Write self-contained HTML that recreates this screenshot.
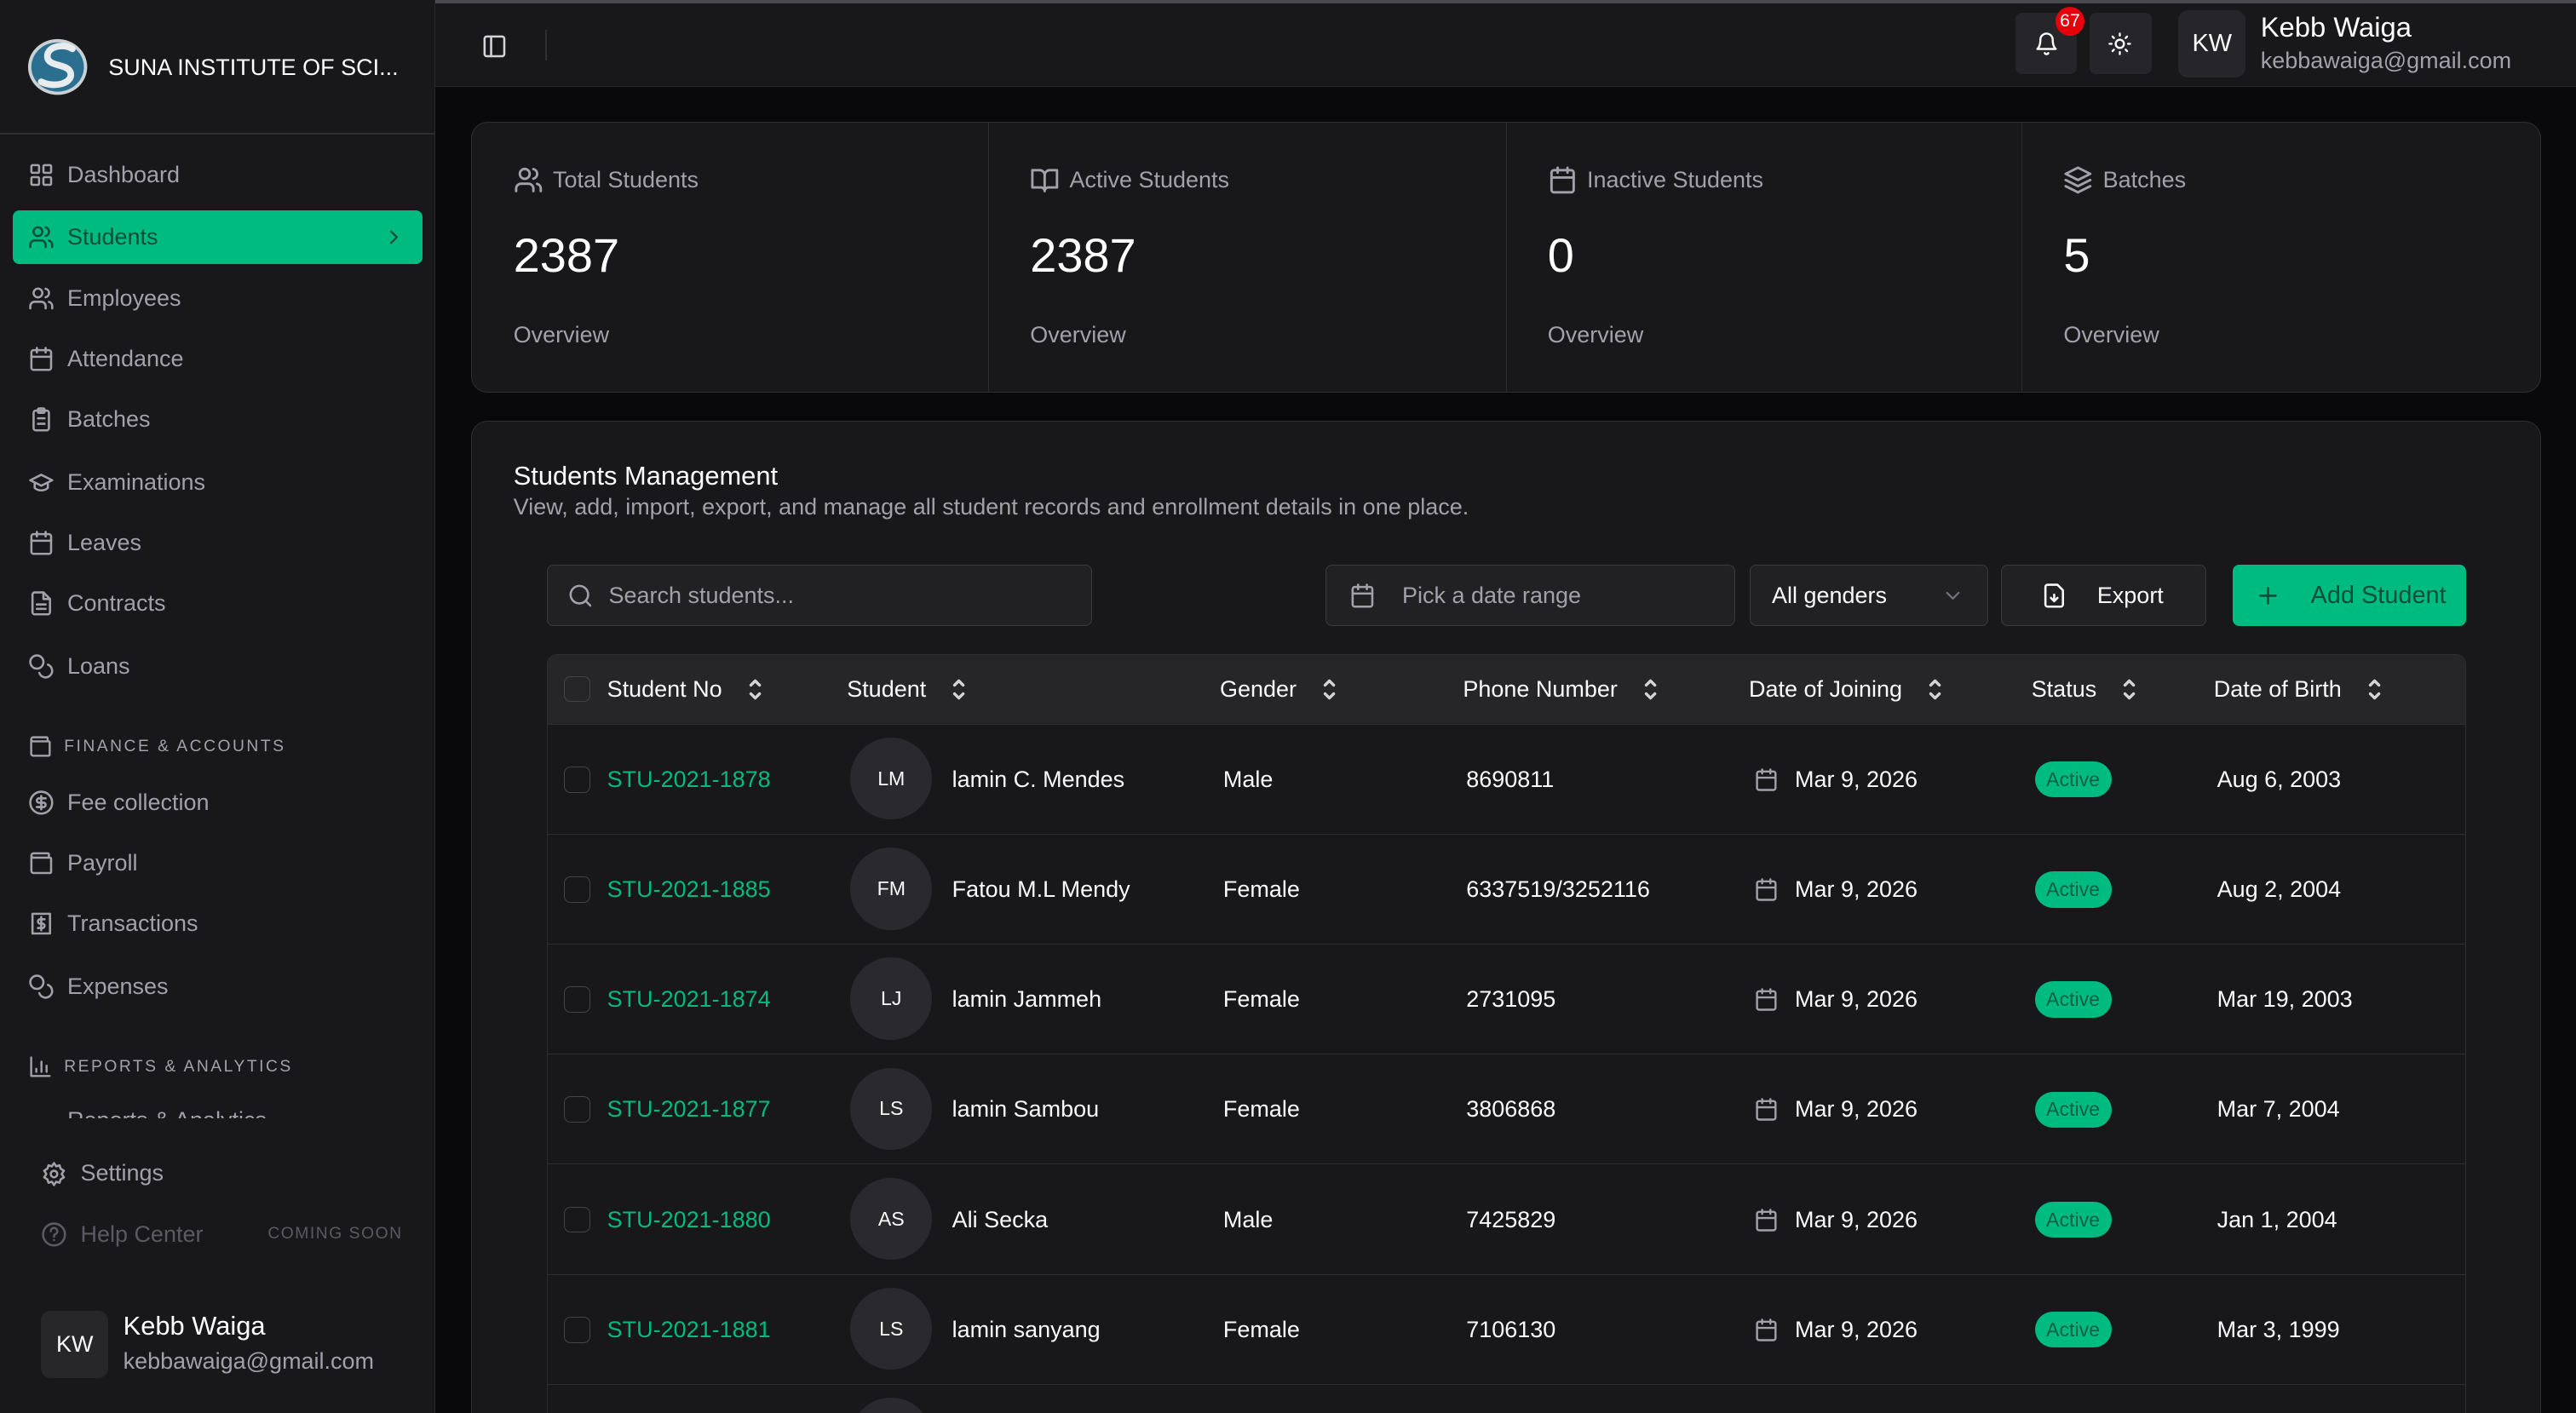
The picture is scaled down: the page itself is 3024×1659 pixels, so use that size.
<!DOCTYPE html>
<html><head><meta charset="utf-8"><style>
html{zoom:1.92857;overflow:hidden;height:860px}
*{box-sizing:border-box;margin:0;padding:0}
body{width:1568px;height:860px;overflow:hidden;background:#09090b;font-family:"Liberation Sans",sans-serif;color:#fafafa;position:relative}
.a{position:absolute}
svg{fill:none;stroke:currentColor;stroke-width:2;stroke-linecap:round;stroke-linejoin:round}
.side{left:0;top:0;width:265px;height:860px;background:#18181b;border-right:1px solid #27272a}
.nav{position:absolute;left:8px;width:249px;height:33px;display:flex;align-items:center;padding-left:9px;font-size:14px;color:#a1a1aa;gap:8px}
.nav svg{width:16px;height:16px}
.sec{position:absolute;left:17px;font-size:10px;letter-spacing:1.3px;color:#a1a1aa;display:flex;align-items:center;gap:7px}
.sec svg{width:15px;height:15px}
.hdr{left:265px;top:2px;width:1303px;height:51px;background:#18181b;border-bottom:1px solid #27272a}
.card{background:#18181b;border:1px solid #2e2e32;border-radius:10px}
.stat{position:absolute;top:0;height:164px;width:315px;border-left:1px solid #2e2e32;padding:26px 0 0 25px}
.stat .t{display:flex;align-items:center;gap:6px;color:#a1a1aa;font-size:14px}
.stat .t svg{width:18px;height:18px}
.stat .n{font-size:29px;margin-top:20px;color:#fff}
.stat .o{font-size:14px;color:#a1a1aa;margin-top:24px}
.inp{position:absolute;top:344px;height:37px;border:1px solid #3a3a3f;background:#212124;border-radius:4px;display:flex;align-items:center;font-size:14px;color:#a1a1aa}
.inp svg{width:16px;height:16px}
.th{position:absolute;top:0;height:42px;display:flex;align-items:center;gap:14px;font-size:14px;color:#fafafa}
.th svg{width:12px;height:14px;stroke:#d4d4d8}
.row{position:absolute;left:0;width:1167px;height:67px;border-top:1px solid #2e2e32;font-size:14px}
.row>div{position:absolute;top:0;height:67px;display:flex;align-items:center}
.cb{width:16px;height:16px;border:1px solid #444448;border-radius:4px}
.av{width:50px;border-radius:50%;background:#2a2a2e;justify-content:center;font-size:12px;margin-top:8px;height:50px!important}
.badge{background:#00bb7f;color:#065f46;font-size:12px;border-radius:11px;padding:4px 7px;line-height:14px}
</style></head><body>
<div class="a" style="left:0;top:0;width:1568px;height:2px;background:#4a4a4e"></div>
<div class="a side">
 <div class="a" style="left:0;top:81px;width:265px;height:1px;background:#2e2e32"></div>
 <svg class="a" style="left:16px;top:22px;width:38px;height:38px;stroke:none" viewBox="0 0 38 38"><ellipse cx="19" cy="19" rx="18" ry="17" fill="#c9d1d4"/><ellipse cx="19" cy="19" rx="16" ry="15" fill="#2a6f8f"/><path d="M28 8c-6-4-17-1-15 6 2 5 13 3 14 9 1 6-10 9-18 5" stroke="#e8ecee" stroke-width="4" fill="none"/></svg>
 <div class="a" style="left:66px;top:33px;font-size:14px;color:#fff">SUNA INSTITUTE OF SCI...</div>
 <div class="nav" style="top:90px"><svg viewBox="0 0 24 24"><rect x="3" y="3" width="7" height="7" rx="1"/><rect x="14" y="3" width="7" height="7" rx="1"/><rect x="3" y="14" width="7" height="7" rx="1"/><rect x="14" y="14" width="7" height="7" rx="1"/></svg>Dashboard</div>
 <div class="nav" style="top:128px;background:#00bb7f;color:#064e3b;border-radius:4px"><svg viewBox="0 0 24 24"><path d="M16 21v-2a4 4 0 0 0-4-4H6a4 4 0 0 0-4 4v2"/><circle cx="9" cy="7" r="4"/><path d="M22 21v-2a4 4 0 0 0-3-3.9M16 3.1a4 4 0 0 1 0 7.8"/></svg>Students<svg style="position:absolute;right:10px;width:14px" viewBox="0 0 24 24"><path d="m9 18 6-6-6-6"/></svg></div>
 <div class="nav" style="top:165px"><svg viewBox="0 0 24 24"><path d="M16 21v-2a4 4 0 0 0-4-4H6a4 4 0 0 0-4 4v2"/><circle cx="9" cy="7" r="4"/><path d="M22 21v-2a4 4 0 0 0-3-3.9M16 3.1a4 4 0 0 1 0 7.8"/></svg>Employees</div>
 <div class="nav" style="top:202px"><svg viewBox="0 0 24 24"><rect x="3" y="4" width="18" height="18" rx="2"/><path d="M16 2v4M8 2v4M3 10h18"/></svg>Attendance</div>
 <div class="nav" style="top:239px"><svg viewBox="0 0 24 24"><rect x="5" y="4" width="14" height="18" rx="2"/><rect x="9" y="2" width="6" height="4" rx="1"/><path d="M9 11h6M9 16h6"/></svg>Batches</div>
 <div class="nav" style="top:277px"><svg viewBox="0 0 24 24"><path d="M22 10 12 5 2 10l10 5 10-5z"/><path d="M6 12v5c3 3 9 3 12 0v-5"/></svg>Examinations</div>
 <div class="nav" style="top:314px"><svg viewBox="0 0 24 24"><rect x="3" y="4" width="18" height="18" rx="2"/><path d="M16 2v4M8 2v4M3 10h18"/></svg>Leaves</div>
 <div class="nav" style="top:351px"><svg viewBox="0 0 24 24"><path d="M14 2H6a2 2 0 0 0-2 2v16a2 2 0 0 0 2 2h12a2 2 0 0 0 2-2V8z"/><path d="M14 2v6h6M8 13h8M8 17h8"/></svg>Contracts</div>
 <div class="nav" style="top:389px"><svg viewBox="0 0 24 24"><circle cx="8" cy="8" r="6"/><path d="M18.1 10.4A6 6 0 1 1 10.3 18"/></svg>Loans</div>
 <div class="sec" style="top:447px"><svg viewBox="0 0 24 24"><path d="M19 7V4a1 1 0 0 0-1-1H5a2 2 0 0 0 0 4h15a1 1 0 0 1 1 1v12a1 1 0 0 1-1 1H5a2 2 0 0 1-2-2V5"/></svg>FINANCE &amp; ACCOUNTS</div>
 <div class="nav" style="top:472px"><svg viewBox="0 0 24 24"><circle cx="12" cy="12" r="10"/><path d="M16 8h-6a2 2 0 1 0 0 4h4a2 2 0 1 1 0 4H8M12 18V6"/></svg>Fee collection</div>
 <div class="nav" style="top:509px"><svg viewBox="0 0 24 24"><path d="M19 7V4a1 1 0 0 0-1-1H5a2 2 0 0 0 0 4h15a1 1 0 0 1 1 1v12a1 1 0 0 1-1 1H5a2 2 0 0 1-2-2V5"/></svg>Payroll</div>
 <div class="nav" style="top:546px"><svg viewBox="0 0 24 24"><rect x="4" y="3" width="16" height="18"/><path d="M15 8h-4a2 2 0 0 0 0 4h2a2 2 0 0 1 0 4H9M12 6v12"/></svg>Transactions</div>
 <div class="nav" style="top:584px"><svg viewBox="0 0 24 24"><circle cx="8" cy="8" r="6"/><path d="M18.1 10.4A6 6 0 1 1 10.3 18"/></svg>Expenses</div>
 <div class="sec" style="top:642px"><svg viewBox="0 0 24 24"><path d="M3 3v18h18M8 17v-3M13 17V7M18 17v-6"/></svg>REPORTS &amp; ANALYTICS</div>
 <div class="a" style="left:17px;top:676px;width:160px;height:5px;overflow:hidden;font-size:14px;color:#a1a1aa"><div style="margin-top:-2px;padding-left:24px">Reports &amp; Analytics</div></div>
 <div class="nav" style="top:698px;left:16px"><svg viewBox="0 0 24 24"><circle cx="12" cy="12" r="3"/><path d="M12 2l2 3 3-1 1 3 3 2-2 3 2 3-3 2-1 3-3-1-2 3-2-3-3 1-1-3-3-2 2-3-2-3 3-2 1-3 3 1z"/></svg>Settings</div>
 <div class="nav" style="top:735px;left:16px;color:#5a5a60"><svg viewBox="0 0 24 24"><circle cx="12" cy="12" r="10"/><path d="M9 9a3 3 0 1 1 4 2.8c-1 .4-1 1.2-1 2.2M12 17h.01"/></svg>Help Center<span style="position:absolute;left:147px;font-size:10px;letter-spacing:.8px">COMING SOON</span></div>
 <div class="a" style="left:25px;top:798px;width:41px;height:41px;border-radius:6px;background:#27272a;display:flex;align-items:center;justify-content:center;font-size:14px">KW</div>
 <div class="a" style="left:75px;top:798px;font-size:16px;color:#fff">Kebb Waiga</div>
 <div class="a" style="left:75px;top:821px;font-size:14px;color:#a1a1aa">kebbawaiga@gmail.com</div>
</div>
<div class="a hdr">
 <svg class="a" style="left:28px;top:18px;width:16px;height:16px;stroke:#d4d4d8" viewBox="0 0 24 24"><rect x="3" y="3" width="18" height="18" rx="2"/><path d="M9 3v18"/></svg>
 <div class="a" style="left:67px;top:16px;width:1px;height:19px;background:#2e2e32"></div>
 <div class="a" style="left:962px;top:6px;width:37px;height:37px;background:#26262a;border-radius:4px"></div>
 <svg class="a" style="left:973px;top:17px;width:15px;height:15px" viewBox="0 0 24 24"><path d="M6 8a6 6 0 0 1 12 0c0 7 3 9 3 9H3s3-2 3-9M10.3 21a1.9 1.9 0 0 0 3.4 0"/></svg>
 <div class="a" style="left:986px;top:2px;width:18px;height:18px;border-radius:50%;background:#e7000b;font-size:11px;text-align:center;line-height:18px">67</div>
 <div class="a" style="left:1007px;top:6px;width:38px;height:37px;background:#26262a;border-radius:4px"></div>
 <svg class="a" style="left:1018px;top:17px;width:15px;height:15px" viewBox="0 0 24 24"><circle cx="12" cy="12" r="4"/><path d="M12 2v2M12 20v2M4.9 4.9l1.4 1.4M17.7 17.7l1.4 1.4M2 12h2M20 12h2M6.3 17.7l-1.4 1.4M19.1 4.9l-1.4 1.4"/></svg>
 <div class="a" style="left:1061px;top:4px;width:41px;height:41px;background:#26262a;border-radius:6px;display:flex;align-items:center;justify-content:center;font-size:15px">KW</div>
 <div class="a" style="left:1111px;top:5px;font-size:17px;color:#fff">Kebb Waiga</div>
 <div class="a" style="left:1111px;top:27px;font-size:14px;color:#a1a1aa">kebbawaiga@gmail.com</div>
</div>
<div class="a card" style="left:287px;top:74px;width:1260px;height:165px;overflow:hidden">
 <div class="stat" style="left:0;border-left:none"><div class="t"><svg viewBox="0 0 24 24"><path d="M16 21v-2a4 4 0 0 0-4-4H6a4 4 0 0 0-4 4v2"/><circle cx="9" cy="7" r="4"/><path d="M22 21v-2a4 4 0 0 0-3-3.9M16 3.1a4 4 0 0 1 0 7.8"/></svg>Total Students</div><div class="n">2387</div><div class="o">Overview</div></div>
 <div class="stat" style="left:314px"><div class="t"><svg viewBox="0 0 24 24"><path d="M2 4h6a4 4 0 0 1 4 4v13a3 3 0 0 0-3-3H2zM22 4h-6a4 4 0 0 0-4 4v13a3 3 0 0 1 3-3h7z"/></svg>Active Students</div><div class="n">2387</div><div class="o">Overview</div></div>
 <div class="stat" style="left:629px"><div class="t"><svg viewBox="0 0 24 24"><rect x="3" y="4" width="18" height="18" rx="2"/><path d="M16 2v4M8 2v4M3 10h18"/></svg>Inactive Students</div><div class="n">0</div><div class="o">Overview</div></div>
 <div class="stat" style="left:943px"><div class="t"><svg viewBox="0 0 24 24"><path d="m12 2 10 5-10 5L2 7z"/><path d="m2 12 10 5 10-5M2 17l10 5 10-5"/></svg>Batches</div><div class="n">5</div><div class="o">Overview</div></div>
</div>
<div class="a card" style="left:287px;top:256px;width:1260px;height:620px">
 <div class="a" style="left:25px;top:24px;font-size:16px;color:#fff">Students Management</div>
 <div class="a" style="left:25px;top:44px;font-size:14px;color:#a1a1aa">View, add, import, export, and manage all student records and enrollment details in one place.</div>
</div>
<div class="inp" style="left:333px;width:332px;padding-left:12px;gap:9px"><svg viewBox="0 0 24 24"><circle cx="11" cy="11" r="8"/><path d="m21 21-4.3-4.3"/></svg>Search students...</div>
<div class="inp" style="left:807px;width:249px;padding-left:14px;gap:16px"><svg viewBox="0 0 24 24"><rect x="3" y="4" width="18" height="18" rx="2"/><path d="M16 2v4M8 2v4M3 10h18"/></svg>Pick a date range</div>
<div class="inp" style="left:1065px;width:145px;padding-left:13px;color:#fafafa">All genders<svg style="position:absolute;right:14px;width:14px;stroke:#71717a" viewBox="0 0 24 24"><path d="m6 9 6 6 6-6"/></svg></div>
<div class="inp" style="left:1218px;width:125px;padding-left:24px;gap:18px;color:#fafafa"><svg viewBox="0 0 24 24"><path d="M15 2H6a2 2 0 0 0-2 2v16a2 2 0 0 0 2 2h12a2 2 0 0 0 2-2V7z"/><path d="M12 11v6M9 14l3 3 3-3"/></svg>Export</div>
<div class="inp" style="left:1359px;width:142px;background:#00bb7f;border-color:#00bb7f;color:#064e3b;padding-left:13px;gap:18px;font-size:15px"><svg viewBox="0 0 24 24"><path d="M5 12h14M12 5v14"/></svg>Add Student</div>
<div class="a" style="left:333px;top:398px;width:1168px;height:480px;border:1px solid #2e2e32;border-radius:6px;overflow:hidden;background:#18181b">
 <div class="a" style="left:0;top:0;width:1168px;height:42px;background:#262629"></div>
 <div class="th" style="left:10px"><div class="cb" style="margin-right:-4px"></div>Student No<svg viewBox="0 0 12 16"><path d="M3 5l3-3 3 3M3 11l3 3 3-3"/></svg></div>
 <div class="th" style="left:182px">Student<svg viewBox="0 0 12 16"><path d="M3 5l3-3 3 3M3 11l3 3 3-3"/></svg></div>
 <div class="th" style="left:409px">Gender<svg viewBox="0 0 12 16"><path d="M3 5l3-3 3 3M3 11l3 3 3-3"/></svg></div>
 <div class="th" style="left:557px">Phone Number<svg viewBox="0 0 12 16"><path d="M3 5l3-3 3 3M3 11l3 3 3-3"/></svg></div>
 <div class="th" style="left:731px">Date of Joining<svg viewBox="0 0 12 16"><path d="M3 5l3-3 3 3M3 11l3 3 3-3"/></svg></div>
 <div class="th" style="left:903px">Status<svg viewBox="0 0 12 16"><path d="M3 5l3-3 3 3M3 11l3 3 3-3"/></svg></div>
 <div class="th" style="left:1014px">Date of Birth<svg viewBox="0 0 12 16"><path d="M3 5l3-3 3 3M3 11l3 3 3-3"/></svg></div>
 <div class="row" style="top:42px"><div style="left:10px"><div class="cb"></div></div><div style="left:36px;color:#00bb7f">STU-2021-1878</div><div class="av" style="left:184px;top:0;display:flex">LM</div><div style="left:246px">lamin C. Mendes</div><div style="left:411px">Male</div><div style="left:559px">8690811</div><div style="left:734px;gap:10px"><svg style="width:15px;height:15px;stroke:#a1a1aa" viewBox="0 0 24 24"><rect x="3" y="4" width="18" height="18" rx="2"/><path d="M16 2v4M8 2v4M3 10h18"/></svg>Mar 9, 2026</div><div style="left:905px"><span class="badge">Active</span></div><div style="left:1016px">Aug 6, 2003</div></div>
 <div class="row" style="top:109px"><div style="left:10px"><div class="cb"></div></div><div style="left:36px;color:#00bb7f">STU-2021-1885</div><div class="av" style="left:184px;top:0;display:flex">FM</div><div style="left:246px">Fatou M.L Mendy</div><div style="left:411px">Female</div><div style="left:559px">6337519/3252116</div><div style="left:734px;gap:10px"><svg style="width:15px;height:15px;stroke:#a1a1aa" viewBox="0 0 24 24"><rect x="3" y="4" width="18" height="18" rx="2"/><path d="M16 2v4M8 2v4M3 10h18"/></svg>Mar 9, 2026</div><div style="left:905px"><span class="badge">Active</span></div><div style="left:1016px">Aug 2, 2004</div></div>
 <div class="row" style="top:176px"><div style="left:10px"><div class="cb"></div></div><div style="left:36px;color:#00bb7f">STU-2021-1874</div><div class="av" style="left:184px;top:0;display:flex">LJ</div><div style="left:246px">lamin Jammeh</div><div style="left:411px">Female</div><div style="left:559px">2731095</div><div style="left:734px;gap:10px"><svg style="width:15px;height:15px;stroke:#a1a1aa" viewBox="0 0 24 24"><rect x="3" y="4" width="18" height="18" rx="2"/><path d="M16 2v4M8 2v4M3 10h18"/></svg>Mar 9, 2026</div><div style="left:905px"><span class="badge">Active</span></div><div style="left:1016px">Mar 19, 2003</div></div>
 <div class="row" style="top:243px"><div style="left:10px"><div class="cb"></div></div><div style="left:36px;color:#00bb7f">STU-2021-1877</div><div class="av" style="left:184px;top:0;display:flex">LS</div><div style="left:246px">lamin Sambou</div><div style="left:411px">Female</div><div style="left:559px">3806868</div><div style="left:734px;gap:10px"><svg style="width:15px;height:15px;stroke:#a1a1aa" viewBox="0 0 24 24"><rect x="3" y="4" width="18" height="18" rx="2"/><path d="M16 2v4M8 2v4M3 10h18"/></svg>Mar 9, 2026</div><div style="left:905px"><span class="badge">Active</span></div><div style="left:1016px">Mar 7, 2004</div></div>
 <div class="row" style="top:310px"><div style="left:10px"><div class="cb"></div></div><div style="left:36px;color:#00bb7f">STU-2021-1880</div><div class="av" style="left:184px;top:0;display:flex">AS</div><div style="left:246px">Ali Secka</div><div style="left:411px">Male</div><div style="left:559px">7425829</div><div style="left:734px;gap:10px"><svg style="width:15px;height:15px;stroke:#a1a1aa" viewBox="0 0 24 24"><rect x="3" y="4" width="18" height="18" rx="2"/><path d="M16 2v4M8 2v4M3 10h18"/></svg>Mar 9, 2026</div><div style="left:905px"><span class="badge">Active</span></div><div style="left:1016px">Jan 1, 2004</div></div>
 <div class="row" style="top:377px"><div style="left:10px"><div class="cb"></div></div><div style="left:36px;color:#00bb7f">STU-2021-1881</div><div class="av" style="left:184px;top:0;display:flex">LS</div><div style="left:246px">lamin sanyang</div><div style="left:411px">Female</div><div style="left:559px">7106130</div><div style="left:734px;gap:10px"><svg style="width:15px;height:15px;stroke:#a1a1aa" viewBox="0 0 24 24"><rect x="3" y="4" width="18" height="18" rx="2"/><path d="M16 2v4M8 2v4M3 10h18"/></svg>Mar 9, 2026</div><div style="left:905px"><span class="badge">Active</span></div><div style="left:1016px">Mar 3, 1999</div></div>
 <div class="row" style="top:444px"><div class="av" style="left:184px;top:0;display:flex"></div></div>
</div>
</body></html>
